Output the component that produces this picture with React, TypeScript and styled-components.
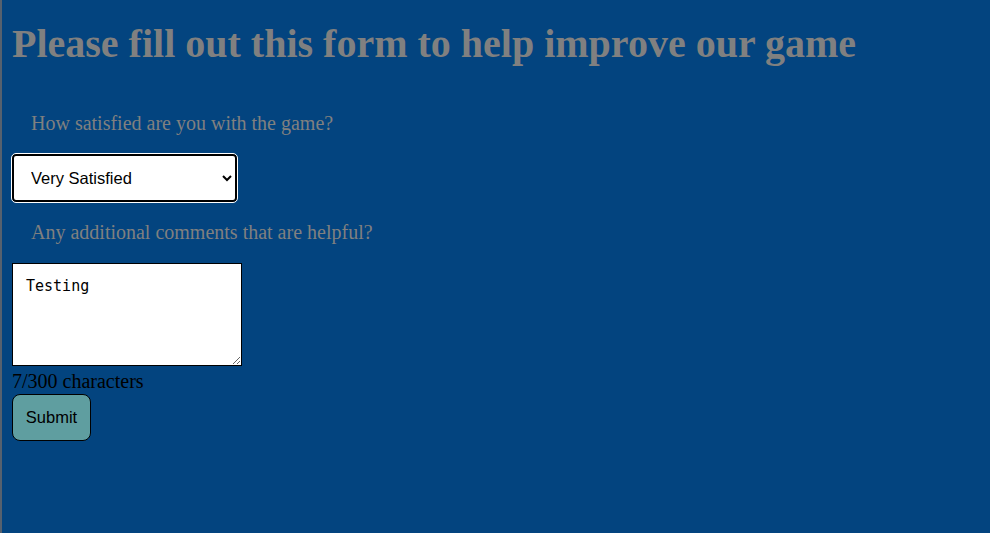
import React, { useState } from "react";
import styled, { createGlobalStyle } from "styled-components";

const Global = createGlobalStyle`
  html, body { margin: 0; padding: 0; background: #03447f; }
  body {
    font-family: "Liberation Serif", "Times New Roman", serif;
    min-height: 533px;
    border-left: 2px solid #56616e;
    box-sizing: border-box;
  }
`;

const Page = styled.main`
  padding: 0 10px;
`;

const Title = styled.h1`
  color: #808080;
  font-size: 40px;
  font-weight: bold;
  margin: 21px 0 0;
  line-height: 46px;
`;

const Form = styled.form`
  display: flex;
  flex-direction: column;
  align-items: flex-start;
  margin-top: 45px;
`;

const Label = styled.label`
  color: #808080;
  font-size: 20px;
  line-height: 23px;
  padding-left: 19px;
  margin-bottom: 19px;
`;

const Select = styled.select`
  width: 225px;
  height: 48px;
  border: 2px solid #000;
  border-radius: 4px;
  outline: 1px solid #fff;
  background: #fff;
  font-family: "Liberation Sans", Arial, sans-serif;
  font-size: 16.5px;
  padding: 0 8px 0 13px;
  margin-bottom: 19px;
  color: #000;
`;

const TextArea = styled.textarea`
  width: 230px;
  height: 103px;
  box-sizing: border-box;
  border: 1px solid #000;
  background: #fff;
  font-family: "DejaVu Sans Mono", monospace;
  font-size: 15px;
  padding: 13px 13px;
  margin: 0;
  resize: both;
`;

const Counter = styled.div`
  color: #000;
  font-size: 20px;
  line-height: 23px;
  margin-top: 4px;
`;

const Button = styled.button`
  background: #5f9ea0;
  border: 1px solid #000;
  border-radius: 8px;
  font-family: "Liberation Sans", Arial, sans-serif;
  font-size: 16.5px;
  color: #000;
  width: 79px;
  height: 47px;
  margin-top: 1px;
`;

export default function App() {
  const [sat, setSat] = useState("very");
  const [text, setText] = useState("Testing");
  return (
    <>
      <Global />
      <Page>
        <Title>Please fill out this form to help improve our game</Title>
        <Form onSubmit={(e) => e.preventDefault()}>
          <Label htmlFor="sat">How satisfied are you with the game?</Label>
          <Select id="sat" value={sat} onChange={(e) => setSat(e.target.value)}>
            <option value="very">Very Satisfied</option>
            <option value="sat">Satisfied</option>
            <option value="neutral">Neutral</option>
            <option value="unsat">Unsatisfied</option>
          </Select>
          <Label htmlFor="comments">Any additional comments that are helpful?</Label>
          <TextArea id="comments" value={text} maxLength={300} onChange={(e) => setText(e.target.value)} />
          <Counter>{text.length}/300 characters</Counter>
          <Button type="submit">Submit</Button>
        </Form>
      </Page>
    </>
  );
}
